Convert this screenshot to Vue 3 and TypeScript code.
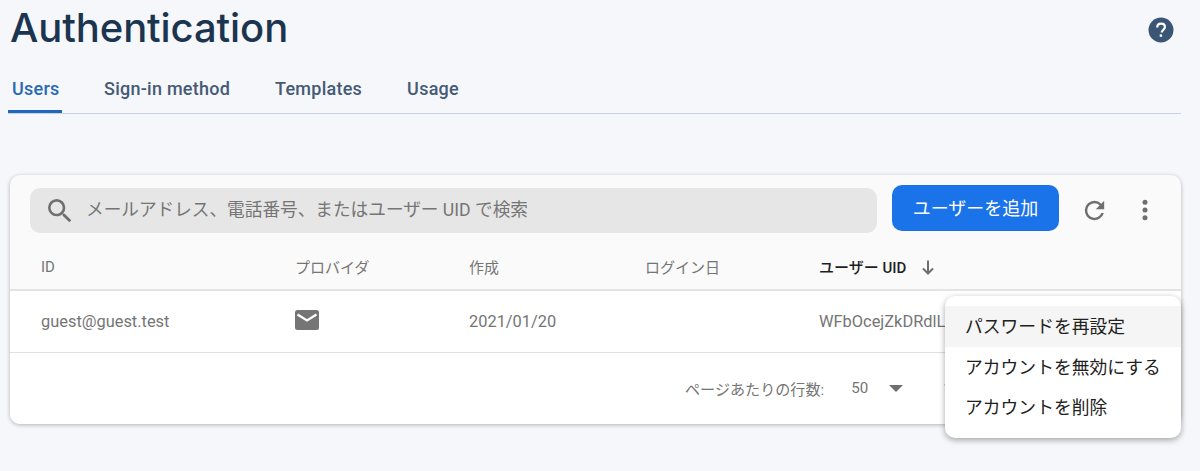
<script setup lang="ts">
const tabs: string[] = ['Users', 'Sign-in method', 'Templates', 'Usage']
const menu: string[] = ['パスワードを再設定', 'アカウントを無効にする', 'アカウントを削除']
</script>

<template>
  <div class="page">
    <header class="top">
      <h1 class="title">Authentication</h1>
      <svg class="help" width="26" height="26" viewBox="0 0 26 26">
        <circle cx="13" cy="13" r="12.5" fill="#3b5675" />
        <path d="M9.2 10.4c0-2.2 1.7-3.7 3.9-3.7 2.2 0 3.8 1.4 3.8 3.3 0 2.6-3.1 2.8-3.1 5.6" fill="none" stroke="#fff" stroke-width="2.2" />
        <rect x="11.7" y="17.4" width="2.4" height="2.4" fill="#fff" />
      </svg>
    </header>
    <nav class="tabs">
      <div v-for="(t, i) in tabs" :key="t" class="tab" :class="{ active: i === 0 }">{{ t }}</div>
    </nav>

    <section class="card">
      <div class="toolbar">
        <div class="search">
          <svg width="32" height="32" viewBox="0 0 24 24" fill="#6f6f6f">
            <path d="M15.5 14h-.79l-.28-.27A6.47 6.47 0 0 0 16 9.5 6.5 6.5 0 1 0 9.5 16c1.61 0 3.09-.59 4.23-1.57l.27.28v.79l5 4.99L20.49 19l-4.99-5zm-6 0C7.01 14 5 11.99 5 9.5S7.01 5 9.5 5 14 7.01 14 9.5 11.99 14 9.5 14z" />
          </svg>
          <span class="placeholder">メールアドレス、電話番号、またはユーザー UID で検索</span>
        </div>
        <button class="add"><span>ユーザーを追加</span></button>
        <svg class="refresh" width="29" height="29" viewBox="0 0 24 24" fill="#6f6f6f">
          <path d="M17.65 6.35A7.96 7.96 0 0 0 12 4a8 8 0 1 0 7.73 10h-2.08A6 6 0 1 1 12 6c1.66 0 3.14.69 4.22 1.78L13 11h7V4l-2.35 2.35z" />
        </svg>
        <svg class="more" width="6" height="22" viewBox="0 0 6 22" fill="#6f6f6f">
          <circle cx="3" cy="3.3" r="2.5" />
          <circle cx="3" cy="11" r="2.5" />
          <circle cx="3" cy="18.7" r="2.5" />
        </svg>
      </div>

      <div class="grid head">
        <span>ID</span>
        <span>プロバイダ</span>
        <span>作成</span>
        <span>ログイン日</span>
        <span class="sorted">ユーザー UID
          <svg width="16" height="16" viewBox="0 0 16 16" fill="none" stroke="#6f6f6f" stroke-width="2">
            <path d="M8 1.5v13M3 9.5l5 5 5-5" />
          </svg>
        </span>
      </div>

      <div class="grid row">
        <span>guest@guest.test</span>
        <span class="mail">
          <svg width="24" height="20" viewBox="0 0 24 20">
            <rect width="24" height="20" rx="2.5" fill="#757575" />
            <path d="M2.5 4.5 12 10.5l9.5-6" fill="none" stroke="#fff" stroke-width="2.2" />
          </svg>
        </span>
        <span>2021/01/20</span>
        <span></span>
        <span class="uid">WFbOcejZkDRdlL</span>
      </div>

      <div class="foot">
        <span>ページあたりの行数:</span>
        <span class="count">50</span>
        <i class="caret"></i>
        <span class="range">1</span>
      </div>

      <ul class="menu">
        <li v-for="(m, i) in menu" :key="m" :class="{ hover: i === 0 }">{{ m }}</li>
      </ul>
    </section>
  </div>
</template>

<style>
html, body { background: #f5f7fa; }
</style>

<style scoped>
.page {
  height: 471px;
  overflow: hidden;
  box-sizing: border-box;
  padding: 0 19px 0 8px;
  font-family: Roboto, "Noto Sans CJK JP", sans-serif;
}
.top {
  height: 62px;
  display: flex;
  align-items: center;
  justify-content: space-between;
  padding: 0 7px 6px 2px;
  box-sizing: border-box;
}
.title {
  margin: 0;
  font-family: Inter, sans-serif;
  font-size: 40px;
  font-weight: 500;
  letter-spacing: -0.1px;
  color: #1b3550;
  line-height: 56px;
}
.help { margin-top: 4px; }
.tabs {
  display: flex;
  height: 51px;
  border-bottom: 1px solid #c6d1e4;
}
.tab {
  height: 51px;
  box-sizing: border-box;
  padding: 16px 23px 0;
  font-size: 18px;
  line-height: 22px;
  font-weight: 500;
  letter-spacing: 0.25px;
  color: #455a75;
}
.tab + .tab { margin-right: -1px; }
.tab.active {
  padding: 16px 4px 0;
  margin-right: 19px;
  width: 54px;
  color: #2a69b3;
  border-bottom: 3px solid #2267bb;
  border-radius: 3px 3px 0 0;
}
.card {
  position: relative;
  margin: 61px 0 0 2px;
  height: 249px;
  background: #fafafa;
  border-radius: 10px;
  box-shadow: 0 1px 4px rgba(0, 0, 0, 0.28);
}
.toolbar {
  height: 58px;
  display: flex;
  align-items: center;
  padding: 0 0 0 20px;
}
.search {
  width: 847px;
  height: 45px;
  margin-top: 13px;
  display: flex;
  align-items: center;
  gap: 10px;
  padding-left: 14px;
  box-sizing: border-box;
  background: #e6e6e6;
  border-radius: 10px;
}
.placeholder {
  margin-top: -5px;
  font-size: 17.65px;
  color: #757575;
}
.add {
  width: 167px;
  height: 46px;
  margin: 8px 0 0 15px;
  padding: 0;
  border: 0;
  border-radius: 10px;
  background: #1a73e8;
  color: #fff;
  font-family: inherit;
  font-size: 18px;
}
.add span { position: relative; top: -1px; }
.refresh { margin: 13px 0 0 21px; }
.more { margin: 12px 0 0 33px; }
.grid {
  display: grid;
  grid-template-columns: 254px 174px 176px 174px 1fr;
  padding-left: 31px;
  align-items: center;
}
.head {
  box-sizing: border-box;
  height: 58px;
  padding-top: 11px;
  font-size: 15px;
  color: #757575;
  border-bottom: 2px solid #e3e3e3;
}
.sorted {
  display: flex;
  align-items: center;
  gap: 14px;
  color: #1f1f1f;
  font-weight: 500;
}
.row {
  box-sizing: border-box;
  height: 62px;
  background: #fff;
  font-size: 16.4px;
  color: #757575;
  border-bottom: 1px solid #e0e0e0;
}
.mail { display: flex; margin-top: -4px; }
.uid { white-space: nowrap; }
.foot {
  height: 71px;
  background: #fff;
  border-radius: 0 0 10px 10px;
  display: flex;
  align-items: center;
  padding-left: 675px;
  font-size: 15.1px;
  color: #757575;
}
.foot span:first-child, .count { margin-top: -2px; }
.count { margin-left: 27px; }
.caret {
  margin-left: 21px;
  border-left: 7px solid transparent;
  border-right: 7px solid transparent;
  border-top: 7px solid #6f6f6f;
}
.range { margin-left: 40px; }
.menu {
  position: absolute;
  top: 121px;
  right: 0;
  width: 236px;
  height: 142px;
  box-sizing: border-box;
  margin: 0;
  padding: 10px 0 0;
  list-style: none;
  background: #fff;
  border-radius: 10px;
  box-shadow: 0 2px 6px rgba(0, 0, 0, 0.35);
  font-size: 17.8px;
  color: #212121;
}
.menu li {
  height: 40.5px;
  line-height: 42px;
  padding-left: 20px;
  white-space: nowrap;
}
.menu li.hover { background: #f5f5f5; }
</style>
